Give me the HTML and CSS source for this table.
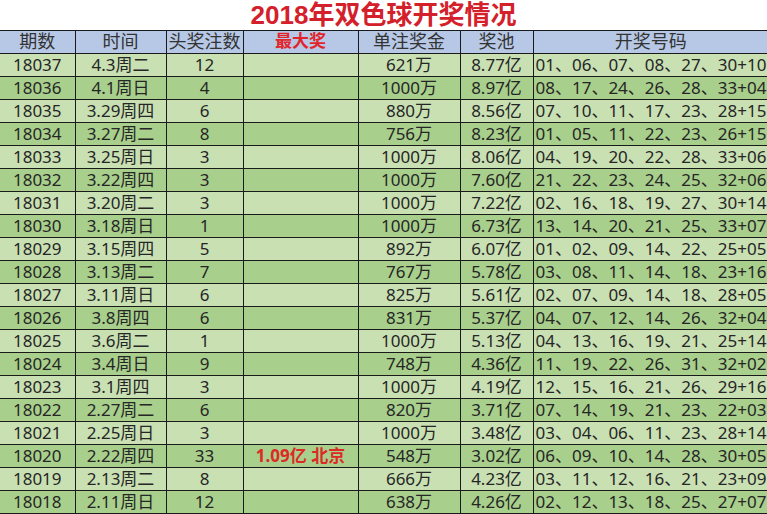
FILE: index.html
```html
<!DOCTYPE html>
<html lang="zh">
<head>
<meta charset="utf-8">
<link rel="stylesheet" href="styles.css">
</head>
<body>
<div class="title">2018年双色球开奖情况</div>
<table class="draws">
<colgroup>
<col class="c1"><col class="c2"><col class="c3"><col class="c4"><col class="c5"><col class="c6"><col class="c7">
</colgroup>
<thead>
<tr><th>期数</th><th>时间</th><th>头奖注数</th><th class="max">最大奖</th><th>单注奖金</th><th>奖池</th><th>开奖号码</th></tr>
</thead>
<tbody>
<tr><td>18037</td><td>4.3周二</td><td>12</td><td></td><td>621万</td><td>8.77亿</td><td class="nums">01、06、07、08、27、30+10</td></tr>
<tr><td>18036</td><td>4.1周日</td><td>4</td><td></td><td>1000万</td><td>8.97亿</td><td class="nums">08、17、24、26、28、33+04</td></tr>
<tr><td>18035</td><td>3.29周四</td><td>6</td><td></td><td>880万</td><td>8.56亿</td><td class="nums">07、10、11、17、23、28+15</td></tr>
<tr><td>18034</td><td>3.27周二</td><td>8</td><td></td><td>756万</td><td>8.23亿</td><td class="nums">01、05、11、22、23、26+15</td></tr>
<tr><td>18033</td><td>3.25周日</td><td>3</td><td></td><td>1000万</td><td>8.06亿</td><td class="nums">04、19、20、22、28、33+06</td></tr>
<tr><td>18032</td><td>3.22周四</td><td>3</td><td></td><td>1000万</td><td>7.60亿</td><td class="nums">21、22、23、24、25、32+06</td></tr>
<tr><td>18031</td><td>3.20周二</td><td>3</td><td></td><td>1000万</td><td>7.22亿</td><td class="nums">02、16、18、19、27、30+14</td></tr>
<tr><td>18030</td><td>3.18周日</td><td>1</td><td></td><td>1000万</td><td>6.73亿</td><td class="nums">13、14、20、21、25、33+07</td></tr>
<tr><td>18029</td><td>3.15周四</td><td>5</td><td></td><td>892万</td><td>6.07亿</td><td class="nums">01、02、09、14、22、25+05</td></tr>
<tr><td>18028</td><td>3.13周二</td><td>7</td><td></td><td>767万</td><td>5.78亿</td><td class="nums">03、08、11、14、18、23+16</td></tr>
<tr><td>18027</td><td>3.11周日</td><td>6</td><td></td><td>825万</td><td>5.61亿</td><td class="nums">02、07、09、14、18、28+05</td></tr>
<tr><td>18026</td><td>3.8周四</td><td>6</td><td></td><td>831万</td><td>5.37亿</td><td class="nums">04、07、12、14、26、32+04</td></tr>
<tr><td>18025</td><td>3.6周二</td><td>1</td><td></td><td>1000万</td><td>5.13亿</td><td class="nums">04、13、16、19、21、25+14</td></tr>
<tr><td>18024</td><td>3.4周日</td><td>9</td><td></td><td>748万</td><td>4.36亿</td><td class="nums">11、19、22、26、31、32+02</td></tr>
<tr><td>18023</td><td>3.1周四</td><td>3</td><td></td><td>1000万</td><td>4.19亿</td><td class="nums">12、15、16、21、26、29+16</td></tr>
<tr><td>18022</td><td>2.27周二</td><td>6</td><td></td><td>820万</td><td>3.71亿</td><td class="nums">07、14、19、21、23、22+03</td></tr>
<tr><td>18021</td><td>2.25周日</td><td>3</td><td></td><td>1000万</td><td>3.48亿</td><td class="nums">03、04、06、11、23、28+14</td></tr>
<tr><td>18020</td><td>2.22周四</td><td>33</td><td class="prize">1.09亿 北京</td><td>548万</td><td>3.02亿</td><td class="nums">06、09、10、14、28、30+05</td></tr>
<tr><td>18019</td><td>2.13周二</td><td>8</td><td></td><td>666万</td><td>4.23亿</td><td class="nums">03、11、12、16、21、23+09</td></tr>
<tr><td>18018</td><td>2.11周日</td><td>12</td><td></td><td>638万</td><td>4.26亿</td><td class="nums">02、12、13、18、25、27+07</td></tr>
</tbody>
</table>
</body>
</html>
```
FILE: styles.css
```css
html, body {
  margin: 0;
  padding: 0;
  background: #ffffff;
}
body {
  font-family: "Noto Sans", "Noto Sans CJK SC", sans-serif;
  width: 767px;
  overflow: hidden;
}
.title {
  height: 30px;
  line-height: 30px;
  text-align: center;
  color: #d4202a;
  font-weight: bold;
  font-size: 26px;
  font-family: "Liberation Sans", "Noto Sans CJK SC", sans-serif;
}
.draws {
  border-collapse: collapse;
  table-layout: fixed;
  width: 768px;
}
.c1 { width: 75px; }
.c2 { width: 91px; }
.c3 { width: 77px; }
.c4 { width: 115px; }
.c5 { width: 102px; }
.c6 { width: 73px; }
.c7 { width: 235px; }
.draws th, .draws td {
  border: 1px solid #1a1a1a;
  height: 22px;
  padding: 0;
  text-align: center;
  font-size: 17px;
  line-height: 22px;
  white-space: nowrap;
  overflow: hidden;
  color: #262626;
  font-weight: normal;
}
.draws tr > :first-child { border-left: none; }
.draws tr > :last-child { border-right: none; }
.draws thead th {
  background: #b6c8e5;
  color: #333333;
  font-size: 18px;
  font-family: "Liberation Sans", "Noto Sans CJK SC", sans-serif;
}
.draws thead th.max {
  color: #e0262c;
  font-weight: bold;
  font-size: 17px;
}
.draws tbody tr:nth-child(odd) td { background: #c9e0b3; }
.draws tbody tr:nth-child(even) td { background: #a8cf8c; }
.draws td.nums {
  text-align: left;
  padding-left: 2px;
}
.draws td.prize {
  color: #dd2a24;
  font-weight: bold;
  font-size: 17px;
}
```
